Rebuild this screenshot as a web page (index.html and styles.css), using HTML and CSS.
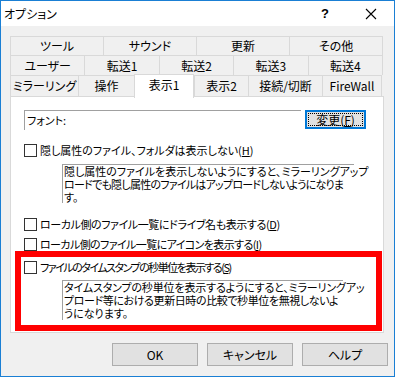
FILE: index.html
```html
<!DOCTYPE html>
<html lang="ja">
<head>
    <meta charset="utf-8">
    <title>オプション</title>
    <link rel="stylesheet" href="styles.css">
</head>
<body>
    <div class="window">
        <div class="titlebar">
            <span class="title">オプション</span>
            <span class="help">?</span>
            <span class="close">
                <svg width="12" height="12" viewBox="0 0 12 12">
                    <path d="M1 1 L11 11 M11 1 L1 11" stroke="#000" stroke-width="1.1" fill="none"/>
                </svg>
            </span>
        </div>
        <div class="client">
            <div class="tabs">
                <div class="tab-row row1">
                    <div class="tab">ツール</div>
                    <div class="tab">サウンド</div>
                    <div class="tab">更新</div>
                    <div class="tab last">その他</div>
                </div>
                <div class="tab-row row2">
                    <div class="tab">ユーザー</div>
                    <div class="tab">転送1</div>
                    <div class="tab">転送2</div>
                    <div class="tab">転送3</div>
                    <div class="tab last">転送4</div>
                </div>
                <div class="tab-row row3">
                    <div class="tab w68">ミラーリング</div>
                    <div class="tab w56">操作</div>
                    <div class="tab w60 selected">表示1</div>
                    <div class="tab w54">表示2</div>
                    <div class="tab w74">接続/切断</div>
                    <div class="tab w60 last">FireWall</div>
                </div>
            </div>
            <div class="panel">
                <div class="font-row">
                    <div class="font-field">フォント:</div>
                    <div class="btn-change"><span>変更(<u>F</u>)</span></div>
                </div>
                <div class="check-row first">
                    <span class="box"></span>
                    <span>隠し属性のファイル、フォルダは表示しない(<u>H</u>)</span>
                </div>
                <div class="desc desc1">
                    <span class="line">隠し属性のファイルを表示しないようにすると、ミラーリングアップ</span>
                    <span class="line tight3">ロードでも隠し属性のファイルはアップロードしないようになりま</span>
                    <span class="line">す。</span>
                </div>
                <div class="check-row gap">
                    <span class="box"></span>
                    <span class="tight1">ローカル側のファイル一覧にドライブ名も表示する(<u>D</u>)</span>
                </div>
                <div class="check-row">
                    <span class="box"></span>
                    <span class="tight2">ローカル側のファイル一覧にアイコンを表示する(<u>I</u>)</span>
                </div>
                <div class="check-row near">
                    <span class="box"></span>
                    <span class="tight5">ファイルのタイムスタンプの秒単位を表示する(<u>S</u>)</span>
                </div>
                <div class="desc desc2">
                    <span class="line tight0">タイムスタンプの秒単位を表示するようにすると、ミラーリングアッ</span>
                    <span class="line tight1">プロード等における更新日時の比較で秒単位を無視しないよ</span>
                    <span class="line">うになります。</span>
                </div>
                <div class="highlight"></div>
            </div>
            <div class="buttons">
                <div class="btn">OK</div>
                <div class="btn">キャンセル</div>
                <div class="btn">ヘルプ</div>
            </div>
        </div>
    </div>
</body>
</html>
```

FILE: styles.css
```css
html, body {
    margin: 0;
    padding: 0;
}

body {
    font-family: "Noto Sans CJK JP", "Noto Sans", sans-serif;
    font-size: 11px;
    font-feature-settings: "palt";
    color: #000;
}

.window {
    width: 395px;
    height: 377px;
    box-sizing: border-box;
    border: 1px solid #1a7fd4;
    background: #f0f0f0;
    display: flex;
    flex-direction: column;
}

.titlebar {
    height: 25px;
    background: #fff;
    display: flex;
    align-items: center;
    padding-left: 3px;
    font-size: 12px;
}

.title {
    flex: 1;
}

.help {
    width: 12px;
    margin-right: 32px;
    font-family: "Liberation Sans", sans-serif;
    font-size: 13px;
    font-weight: bold;
}

.close {
    width: 12px;
    height: 12px;
    margin-right: 17px;
    display: flex;
}

.client {
    flex: 1;
    padding: 10px 0 0 9px;
    position: relative;
}

.tabs {
    width: 373px;
}

.tab-row {
    display: flex;
}

.tab {
    flex: 1;
    box-sizing: border-box;
    border-top: 1px solid #d9d9d9;
    border-left: 1px solid #d9d9d9;
    text-align: center;
    white-space: nowrap;
    font-size: 12px;
}

.tab.last {
    border-right: 1px solid #d9d9d9;
}

.row1 .tab {
    height: 19px;
    line-height: 18px;
}

.row2 .tab {
    height: 20px;
    line-height: 19px;
}

.row3 .tab {
    flex: none;
    height: 21px;
    line-height: 20px;
}

.w68 { width: 68px; }
.w56 { width: 56px; }
.w60 { width: 60px; }
.w54 { width: 54px; }
.w74 { width: 74px; }

.tab.selected {
    background: #fff;
    height: 24px;
    margin-top: -1px;
    margin-bottom: -2px;
    border-right: 1px solid #d9d9d9;
    position: relative;
    z-index: 1;
}

.panel {
    width: 374px;
    height: 237px;
    box-sizing: border-box;
    background: #fff;
    border: 1px solid #d9d9d9;
    padding: 13px 0 0 13px;
    position: relative;
}

.font-row {
    display: flex;
    gap: 4px;
}

.font-field {
    width: 277px;
    height: 20px;
    box-sizing: border-box;
    border-top: 1px solid #a0a0a0;
    border-left: 1px solid #a0a0a0;
    padding-left: 2px;
    line-height: 18px;
}

.btn-change {
    width: 61px;
    height: 19px;
    box-sizing: border-box;
    border: 2px solid #0078d7;
    background: #e1e1e1;
    padding: 1px;
    display: flex;
}

.btn-change span {
    flex: 1;
    border: 1px dotted #000;
    text-align: center;
    line-height: 11px;
    font-size: 12px;
}

.check-row {
    display: flex;
    align-items: center;
    gap: 3px;
    height: 20px;
    white-space: nowrap;
}

.check-row.first {
    margin-top: 10px;
}

.check-row.gap {
    margin-top: 11px;
}

.check-row.near {
    margin-top: 3px;
}

.box {
    width: 13px;
    height: 13px;
    box-sizing: border-box;
    border: 1px solid #333;
    background: #fff;
    flex: none;
}

.desc {
    margin: 4px 0 0 38px;
    box-sizing: border-box;
    border-top: 1px solid #a0a0a0;
    border-left: 1px solid #a0a0a0;
    padding-left: 1px;
    white-space: nowrap;
}

.line {
    display: block;
    height: 13px;
    line-height: 13px;
}

.tight0 { letter-spacing: -0.15px; }
.tight1 { letter-spacing: -0.4px; }
.tight2 { letter-spacing: -0.6px; }
.tight3 { letter-spacing: -0.75px; }
.tight5 { letter-spacing: -1.5px; }

.desc1 {
    width: 292px;
    height: 39px;
}

.desc2 {
    width: 281px;
    height: 40px;
    margin-top: 3px;
}

.highlight {
    position: absolute;
    left: 4px;
    top: 154px;
    width: 367px;
    height: 80px;
    box-sizing: border-box;
    border: 6px solid #ff0000;
}

.buttons {
    display: flex;
    justify-content: flex-end;
    gap: 9px;
    margin: 10px 6px 0 0;
}

.btn {
    width: 86px;
    height: 23px;
    box-sizing: border-box;
    border: 1px solid #adadad;
    background: #e1e1e1;
    text-align: center;
    line-height: 21px;
    font-size: 12px;
}
```
